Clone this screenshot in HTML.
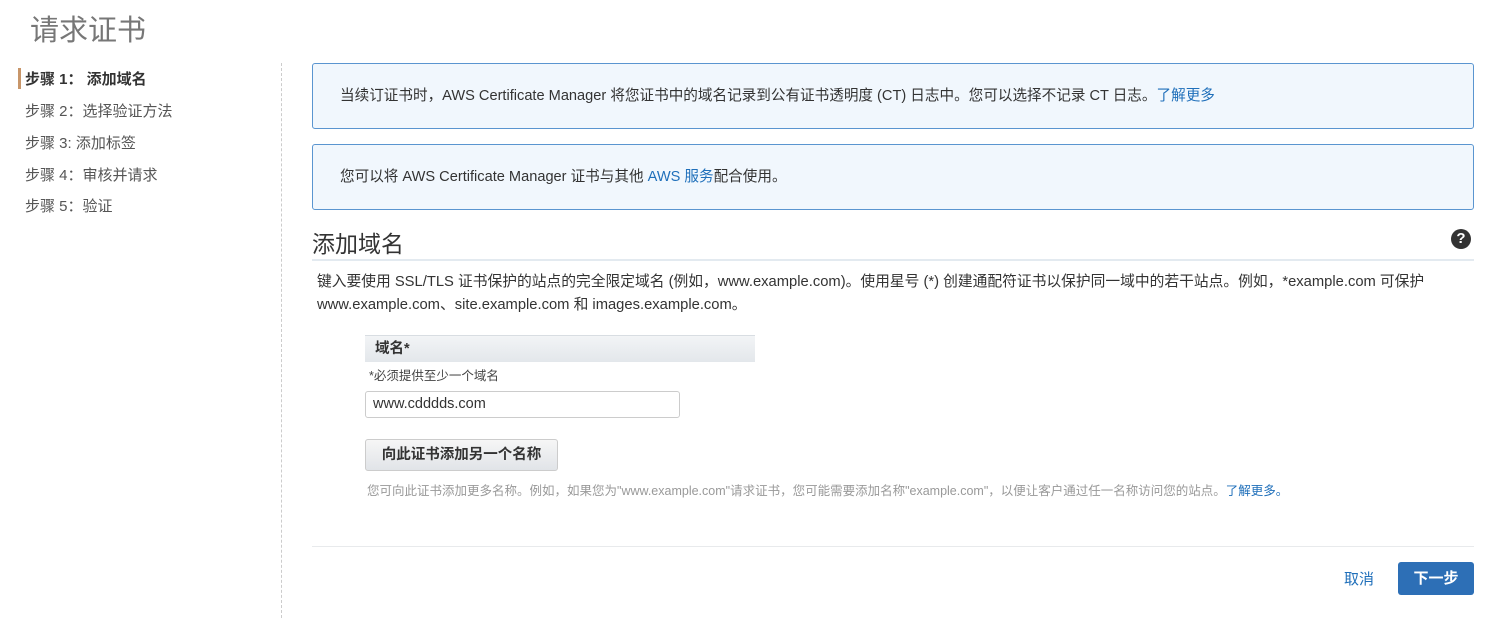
<!DOCTYPE html>
<html><head><meta charset="utf-8"><style>
*{margin:0;padding:0;box-sizing:border-box}
body{width:1500px;height:618px;background:#fff;font-family:"Liberation Sans","Noto Sans CJK SC",sans-serif;color:#444;font-size:14.5px;position:relative;overflow:hidden}
.a{position:absolute;white-space:nowrap}
a{color:#1f6fba;text-decoration:none}
.box{position:absolute;left:312px;width:1162px;border:1px solid #5a95d0;border-radius:3px;background:#f1f7fd;padding-left:27px;font-size:14.6px;color:#333}
.nav{font-size:15px}
</style></head><body>
<div class="a" style="left:30px;top:7px;font-size:29px;color:#777">请求证书</div>
<div class="a" style="left:18px;top:68px;width:3px;height:21px;background:#c8966a"></div>
<div class="a nav" style="left:25px;top:68px;font-weight:bold;color:#333">步骤 1：&nbsp;添加域名</div>
<div class="a nav" style="left:25px;top:100px;color:#555">步骤 2：选择验证方法</div>
<div class="a nav" style="left:25px;top:132px;color:#555">步骤 3: 添加标签</div>
<div class="a nav" style="left:25px;top:164px;color:#555">步骤 4：审核并请求</div>
<div class="a nav" style="left:25px;top:195px;color:#555">步骤 5：验证</div>
<div class="a" style="left:281px;top:63px;width:1px;height:555px;border-left:1px dashed #ccc"></div>
<div class="box" style="top:63px;height:66px;line-height:64px">当续订证书时，AWS Certificate Manager 将您证书中的域名记录到公有证书透明度 (CT) 日志中。您可以选择不记录 CT 日志。<a>了解更多</a></div>
<div class="box" style="top:144px;height:66px;line-height:64px">您可以将 AWS Certificate Manager 证书与其他 <a>AWS 服务</a>配合使用。</div>
<div class="a" style="left:312px;top:225px;font-size:23px;color:#333">添加域名</div>
<div class="a" style="left:1451px;top:229px;width:20px;height:20px;border-radius:50%;background:#333;color:#fff;font-weight:bold;font-size:15px;text-align:center;line-height:20px">?</div>
<div class="a" style="left:312px;top:259px;width:1162px;height:2px;background:#e3eaf0"></div>
<div class="a" style="left:317px;top:271px;color:#333;line-height:23px;font-size:14.75px">键入要使用 SSL/TLS 证书保护的站点的完全限定域名 (例如，www.example.com)。使用星号 (*) 创建通配符证书以保护同一域中的若干站点。例如，*example.com 可保护<br>www.example.com、site.example.com 和 images.example.com。</div>
<div class="a" style="left:365px;top:335px;width:390px;height:27px;background:linear-gradient(#f2f4f6,#e3e7eb);border-top:1px solid #d8dde2;font-weight:bold;color:#333;padding-left:10px;line-height:26px">域名*</div>
<div class="a" style="left:369px;top:365px;font-size:12.5px;color:#444">*必须提供至少一个域名</div>
<div class="a" style="left:365px;top:391px;width:315px;height:27px;border:1px solid #ccc;border-radius:3px;padding-left:7px;line-height:25px;color:#333">www.cdddds.com</div>
<div class="a" style="left:365px;top:439px;width:193px;height:32px;border:1px solid #ccc;border-radius:3px;background:linear-gradient(#f6f6f6,#e1e4e8);font-weight:bold;color:#333;text-align:center;line-height:30px">向此证书添加另一个名称</div>
<div class="a" style="left:367px;top:480px;font-size:12.5px;color:#999">您可向此证书添加更多名称。例如，如果您为"www.example.com"请求证书，您可能需要添加名称"example.com"，以便让客户通过任一名称访问您的站点。<a>了解更多。</a></div>
<div class="a" style="left:312px;top:546px;width:1162px;height:1px;background:#e8eaec"></div>
<div class="a" style="left:1344px;top:568px;color:#1f6fba;font-size:15px">取消</div>
<div class="a" style="left:1398px;top:562px;width:76px;height:33px;background:#2d6fb6;border-radius:3px;color:#fff;font-weight:bold;text-align:center;line-height:33px;font-size:15px">下一步</div>
</body></html>
